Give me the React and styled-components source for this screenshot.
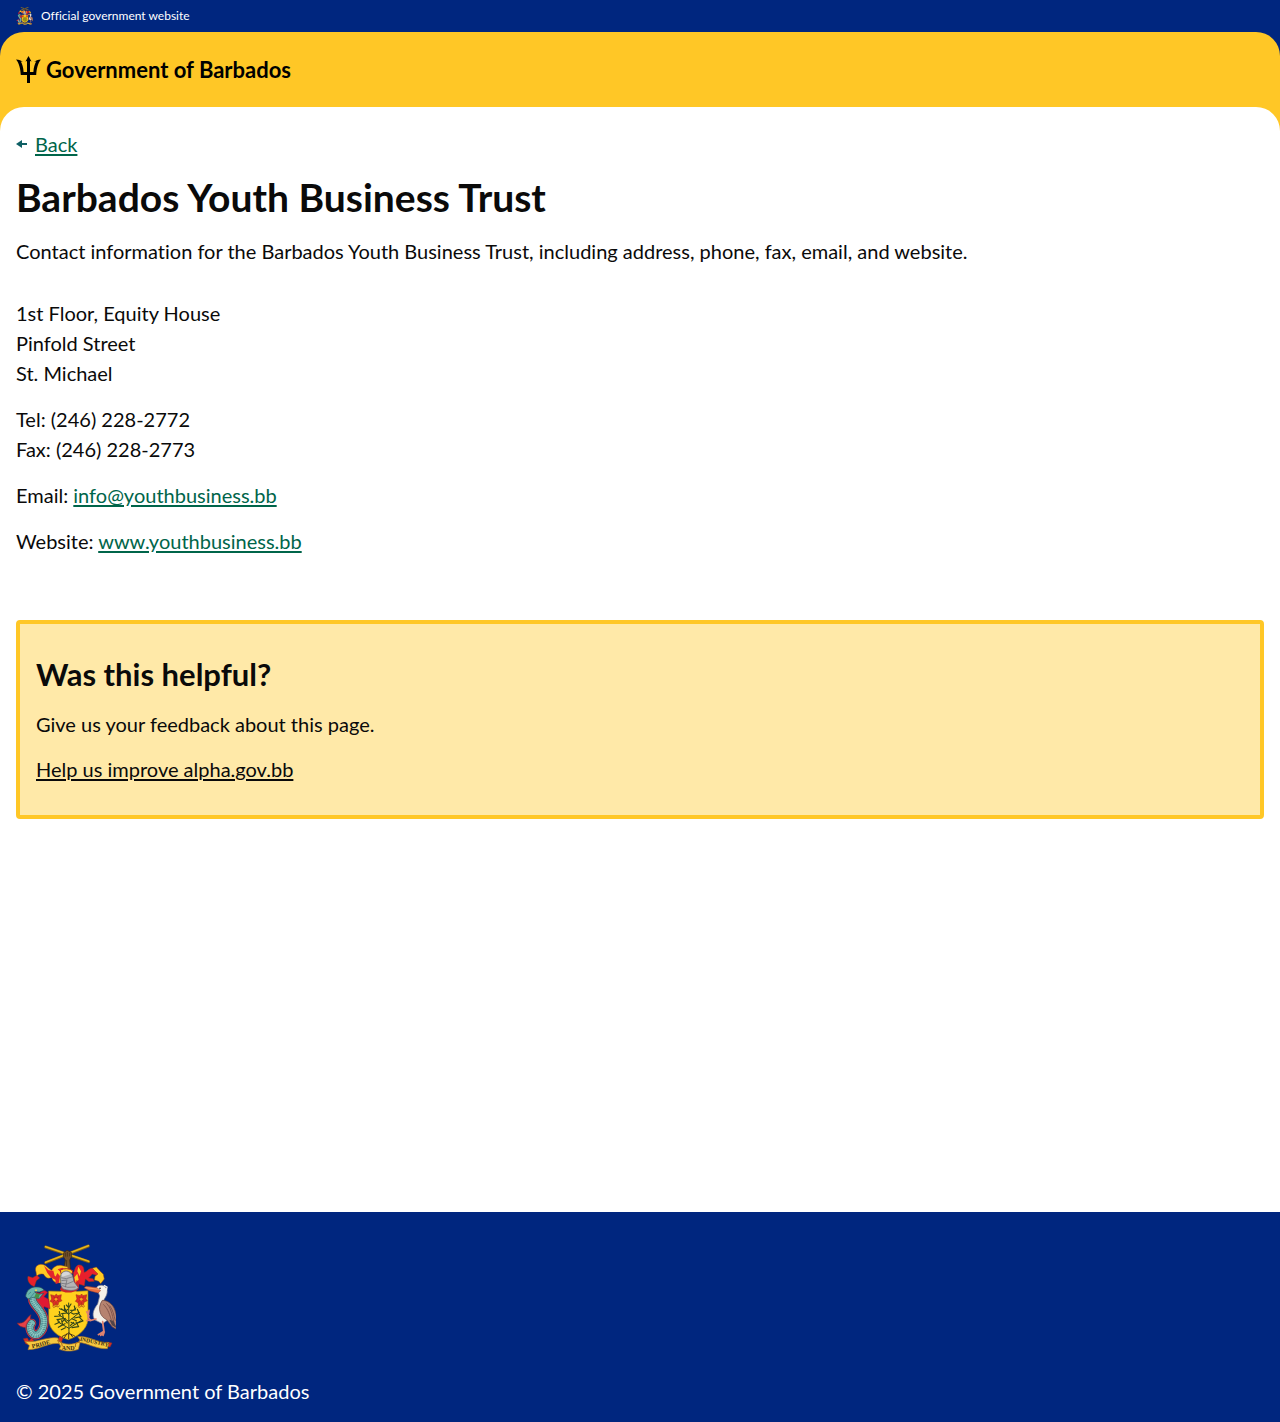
import React from "react";
import styled, { createGlobalStyle } from "styled-components";

const color = {
  blue: "#00267f",
  yellow: "#ffc726",
  cream: "#ffe9a8",
  green: "#00654a",
  arrow: "#0e5f64",
  black: "#0a0a0a",
  white: "#ffffff",
};

const GlobalStyle = createGlobalStyle`
  *, *::before, *::after { box-sizing: border-box; }
  body {
    margin: 0;
    background: ${color.white};
    color: ${color.black};
    font-family: Lato, "Liberation Sans", sans-serif;
    font-size: 20px;
    line-height: 30px;
    font-variant-ligatures: none;
  }
`;

const Page = styled.div`
  min-height: 100vh;
  display: flex;
  flex-direction: column;
`;

const OfficialBar = styled.div`
  display: flex;
  align-items: center;
  gap: 8px;
  height: 32px;
  padding: 0 16px;
  background: ${color.blue};
  color: ${color.white};
  font-size: 12px;
  line-height: 18px;
`;

const HeaderBackdrop = styled.header`
  background: ${color.blue};
`;

const HeaderBand = styled.div`
  display: flex;
  align-items: center;
  padding: 22px 16px;
  border-radius: 24px 24px 0 0;
  background: ${color.yellow};
`;

const Brand = styled.a`
  display: flex;
  align-items: center;
  gap: 5px;
  color: #000;
  font-size: 22px;
  line-height: 31px;
  font-weight: 700;
  text-decoration: none;
`;

const ContentBackdrop = styled.div`
  flex: 1;
  background: linear-gradient(${color.yellow} 24px, ${color.white} 24px);
`;

const Main = styled.main`
  padding: 22px 16px 64px;
  border-radius: 24px 24px 0 0;
  background: ${color.white};
`;

const BackRow = styled.nav`
  display: flex;
  align-items: center;
  gap: 8px;
`;

const TextLink = styled.a`
  color: ${(p) => (p.$dark ? color.black : color.green)};
  text-decoration: underline;
  text-decoration-thickness: 2px;
  text-underline-offset: 2px;
`;

const Title = styled.h1`
  margin: 16px 0;
  font-size: 39px;
  line-height: 45px;
  font-weight: 700;
`;

const Paragraph = styled.p`
  margin: 0;
`;

const Details = styled.address`
  display: flex;
  flex-direction: column;
  gap: 16px;
  margin: 32px 0 64px;
  font-style: normal;
`;

const Feedback = styled.section`
  display: flex;
  flex-direction: column;
  align-items: flex-start;
  gap: 15px;
  padding: 31px 16px;
  border: 4px solid ${color.yellow};
  border-radius: 4px;
  background: ${color.cream};
`;

const FeedbackTitle = styled.h2`
  margin: 0;
  font-size: 31px;
  line-height: 39px;
  font-weight: 700;
`;

const Footer = styled.footer`
  display: flex;
  flex-direction: column;
  gap: 24px;
  padding: 32px 16px 16px;
  background: ${color.blue};
  color: ${color.white};
`;

function Crest({ width, height }) {
  const dolphin = "M63 166C54 196 94 205 96 242C96 278 68 300 56 272C52 262 54 256 59 250";
  return (
    <svg width={width} height={height} viewBox="12 12 300 324" role="img" aria-label="Coat of arms of Barbados">
      <g fill="none" strokeLinecap="round">
        <path d="M101 21L230 65M101 68L229 18" stroke="#7d5d16" strokeWidth="9" />
        <path d="M101 20L230 64M101 67L229 17" stroke="#e5b51c" strokeWidth="5" />
      </g>
      <path d="M155 38l10-7 13 6 1 13-6 10 3 34h-22l6-34-6-10z" fill="#70502c" stroke="#35230f" strokeWidth="2" />
      <path d="M160 38v12M166 36v14M173 38v11M164 60l-1 28" stroke="#40290f" strokeWidth="2" fill="none" />

      <g stroke="#8c3e16" strokeWidth="1.5">
        <path d="M146 128c-12 4-24-2-27-16-10 6-18 2-24-9-9-3-17 0-21 7l-2-14c-5-12 2-22 14-23 16-1 22 13 33 18 5-11 18-18 33-14l14 3 10 18-13 26z" fill="#ffcb22" />
        <path d="M48 109l14 4 13-7 8 8-10 8-6 18c-14-5-22-17-19-31z" fill="#e91f2c" />
        <path d="M184 98c5-7 5-19 15-23 16-3 18 13 17 22 8 0 12-11 24-12 12 0 21 10 21 23l-20-6-11 12 13 2 4 8-16 1-11-8-3 20-16-5-7 11-8-17z" fill="#e91f2c" />
        <path d="M241 85l12-4 11 12 10 10 3 14-11 14-6-7-13-4 2-11 9-7z" fill="#ffcb22" />
      </g>
      <path d="M96 77l14 14 14 1 4 15 12 10-9 3-15-8-10-13zM130 112l6-13 8 9-3 20-10 4zM137 88l14-5 12 8-13 9z" fill="#e3262d" />
      <path d="M187 112l9-11 4 18-9 9zM199 80l8 14-4 15-7-15z" fill="#ffcb22" />
      <path d="M145 90q20-9 37 2l-2 10q-16-8-33-1z" fill="#ffcb22" stroke="#ad2026" strokeWidth="3" />

      <path d="M110 153l35 1 22-6 28 6 33-2v87c-2 29-33 53-59 60-30-8-59-30-59-60z" fill="#ffd11d" stroke="#8d7021" strokeWidth="2" />
      <path d="M144 149c7 10 38 14 56-2l2-18-8-10-2 17-44 3z" fill="#ca242b" />
      <path d="M145 113c1-27 33-26 38-1l3 13 13 18c-10 12-32 9-47 3l-5-9z" fill="#b5b4b5" stroke="#5f6068" strokeWidth="2" />
      <path d="M149 103c7-10 20-10 26 0l-24 7z" fill="#d7d8d9" />
      <path d="M146 113l17 3 20-6M148 122l16-2M148 130l17 2 19-8M165 119l-5 23M151 137l16 5 24-1" fill="none" stroke="#686870" strokeWidth="2" />

      {[132, 208].map((x) => (
        <g key={x}>
          <path d={`M${x - 16} 164l12 3 5-5 4 5 11-3-2 13 4 5-10 5-2 9-6-3-8 5-2-10-8-4 5-7z`} fill="#dd3024" stroke="#9c2d17" strokeWidth="1.5" />
          <path d={`M${x - 8} 170l8 6 8-6M${x - 9} 185l9-7 9 7M${x} 187v12q-8 7-11-1M${x} 198q7 7 11-1`} fill="none" stroke="#9c3215" strokeWidth="2" />
          <circle cx={x} cy="178" r="4" fill="#f5a51f" />
        </g>
      ))}

      <g fill="none" stroke="#34471a" strokeLinecap="round" strokeLinejoin="round">
        <path d="M171 283l-1-94M169 264l-31-18M171 265l36-23M170 244l-30-20M171 243l31-25M170 223l-21-17M170 222l22-18" strokeWidth="3" />
        <path d="M129 253l14-6-8-9M139 262l13-7-3-13M128 229l17-1-3-13M136 239l18-3-2-13M143 206l15 6-1-15M149 221l16-2-5-12M163 195l7 8 7-11M176 211l14-1-3-12M185 222l16-3-5-11M187 234l20-4-8-11M193 250l20-7-10-10M180 263l20-3-8-14M160 263l-12 6M177 247l12 6M159 251l-13 6M180 236l13 6M160 235l-8 9M177 218l9 5M166 249l-9-10M175 257l10-10M167 208l-7 7" strokeWidth="3.5" />
        <path d="M171 278c-6 7-14 6-20 11M171 279c7 7 13 5 18 10M170 282v14M165 281l-8 12M175 282l7 9" stroke="#49351a" strokeWidth="3" />
      </g>

      <path d="M59 252c-6-9-5-18-2-28-9 5-13 16-22 22-7 4-12 4-19 3 5 12 20 14 31 14 5 6 4 11 10 17z" fill="#e64147" stroke="#7c2530" strokeWidth="2" />
      <path d="M67 157l16 2 12-10 12 8-11 13 14 8 4 28-17-6-7 13-12-18-12-3z" fill="#df1933" stroke="#8d1631" strokeWidth="1.5" />
      <path d={dolphin} fill="none" stroke="#c93240" strokeWidth="28" strokeLinecap="round" />
      <path d={dolphin} fill="none" stroke="#274f59" strokeWidth="22" strokeLinecap="round" />
      <path d={dolphin} fill="none" stroke="#78bab7" strokeWidth="19" strokeLinecap="round" />
      <path d={dolphin} fill="none" stroke="#407982" strokeWidth="16" strokeDasharray="1.5 4" />
      <path d={dolphin} fill="none" stroke="#95cbc3" strokeWidth="5" strokeDasharray="4 2" />
      <path d="M41 169c2-19 17-30 33-28 10-1 18 3 23 10l-15 5-14-1 8 9 19-4-14 16-17-4-16 5z" fill="#69b5ad" stroke="#264b58" strokeWidth="2" />
      <path d="M72 160l12 2-5 14-12-5z" fill="#449146" />
      <circle cx="72" cy="151" r="3" fill="#f7d64b" />
      <path d="M49 163l8-7M54 174l14-17" stroke="#35757e" strokeWidth="2" />

      <path d="M253 143c7-10 25-10 30 2 7 14-2 25-7 34-5 9 15 20 17 34l-7 28-15 10-22-11c-12-16-3-34 8-48l6-24z" fill="#f5f1e9" stroke="#80818f" strokeWidth="2" />
      <path d="M276 136l9 5-2 11" fill="none" stroke="#f5f1e9" strokeWidth="4" />
      <path d="M271 181c21 0 36 17 40 37l9 38-5 13-14-8-17-22c-19-8-30-34-13-58z" fill="#b68370" stroke="#633d37" strokeWidth="2" />
      <path d="M274 193c11 11 17 23 24 47M283 190c13 12 17 30 23 59M293 197c10 13 12 27 17 45" fill="none" stroke="#84564d" strokeWidth="3" />
      <path d="M292 239l8 17 15 9-11-23z" fill="#514449" />
      <path d="M255 143l-32-4-7 4 16 9 26 7 8-7z" fill="#eb7042" stroke="#9a412c" strokeWidth="1.5" />
      <path d="M220 143l41 5" fill="none" stroke="#f8bc7b" strokeWidth="2" />
      <circle cx="264" cy="145" r="2.5" fill="#242127" />
      <path d="M252 237l-18 5-6-12 3-19M231 228l-7-13M235 239l-10 3M272 245l4 29-17 10M272 249l4 29-3 8M277 276l-11 10" fill="none" stroke="#df826f" strokeWidth="5" strokeLinecap="round" strokeLinejoin="round" />

      <path d="M34 296l12-2 5 9 7-8 8 7-15 12-10-3zM143 289l10 5-5 13-12-3zM283 306l17 3-6 12-14-4z" fill="#d92d26" stroke="#8d3020" strokeWidth="1.5" />
      <g fill="#f6c940" stroke="#ac741e" strokeWidth="2">
        <path d="M39 304c34 6 67-16 99-10l4 17c-31-5-57 18-94 18l4-12z" />
        <path d="M137 302c20 13 44 14 68 2l-6 24c-19 7-38 7-57 0l4-9z" />
        <path d="M197 290c32-4 61 20 94 18l-5 18c-33 2-59-17-86-19l4-7z" />
      </g>
      <path d="M136 301l12 5 3 13M204 305l-13 5-1 11" fill="none" stroke="#b16e1c" strokeWidth="3" />
      <g fill="#3c2c12" fontFamily="Liberation Serif, serif" fontSize="18" fontWeight="700">
        <text x="61" y="325" transform="rotate(-14 61 325)">PRIDE</text>
        <text x="149" y="329">AND</text>
        <text x="203" y="302" fontSize="17" transform="rotate(12 203 302)">INDUSTRY</text>
      </g>
    </svg>
  );
}

function Trident() {
  return (
    <svg width="25" height="27" viewBox="0 0 25 27" aria-hidden="true">
      <path d="M12.5 0l3 5.4-1.5-.5v11h3.4c.2-4.3 1.4-8 2.8-10.4l-2 .3c1.6-1.4 3.6-1.9 6.8-2.3-3.4 3.9-4.5 10-4.8 15.5H14V27h-3v-8H4.8C4.5 13.5 3.4 7.4 0 3.5c3.2.4 5.2.9 6.8 2.3l-2-.3c1.4 2.4 2.6 6.1 2.8 10.4H11v-11l-1.5.5z" fill="#000" />
    </svg>
  );
}

function BackArrow() {
  return (
    <svg width="11" height="10" viewBox="0 0 11 10" aria-hidden="true">
      <path d="M0 5l6-4v3h5v2H6v3z" fill={color.arrow} />
    </svg>
  );
}

export default function App() {
  return (
    <Page>
      <GlobalStyle />
      <OfficialBar>
        <Crest width="17" height="18" />
        <span>Official government website</span>
      </OfficialBar>
      <HeaderBackdrop>
        <HeaderBand>
          <Brand href="#home">
            <Trident />
            <span>Government of Barbados</span>
          </Brand>
        </HeaderBand>
      </HeaderBackdrop>
      <ContentBackdrop>
        <Main>
          <BackRow aria-label="Back">
            <BackArrow />
            <TextLink href="#back">Back</TextLink>
          </BackRow>
          <Title>Barbados Youth Business Trust</Title>
          <Paragraph>
            Contact information for the Barbados Youth Business Trust, including address, phone, fax, email, and website.
          </Paragraph>
          <Details>
            <Paragraph>
              1st Floor, Equity House
              <br />
              Pinfold Street
              <br />
              St. Michael
            </Paragraph>
            <Paragraph>
              Tel: (246) 228-2772
              <br />
              Fax: (246) 228-2773
            </Paragraph>
            <Paragraph>
              Email: <TextLink href="mailto:info@youthbusiness.bb">info@youthbusiness.bb</TextLink>
            </Paragraph>
            <Paragraph>
              Website: <TextLink href="#website">www.youthbusiness.bb</TextLink>
            </Paragraph>
          </Details>
          <Feedback>
            <FeedbackTitle>Was this helpful?</FeedbackTitle>
            <Paragraph>Give us your feedback about this page.</Paragraph>
            <TextLink $dark href="#feedback">Help us improve alpha.gov.bb</TextLink>
          </Feedback>
        </Main>
      </ContentBackdrop>
      <Footer>
        <Crest width="100" height="108" />
        <Paragraph>© 2025 Government of Barbados</Paragraph>
      </Footer>
    </Page>
  );
}
